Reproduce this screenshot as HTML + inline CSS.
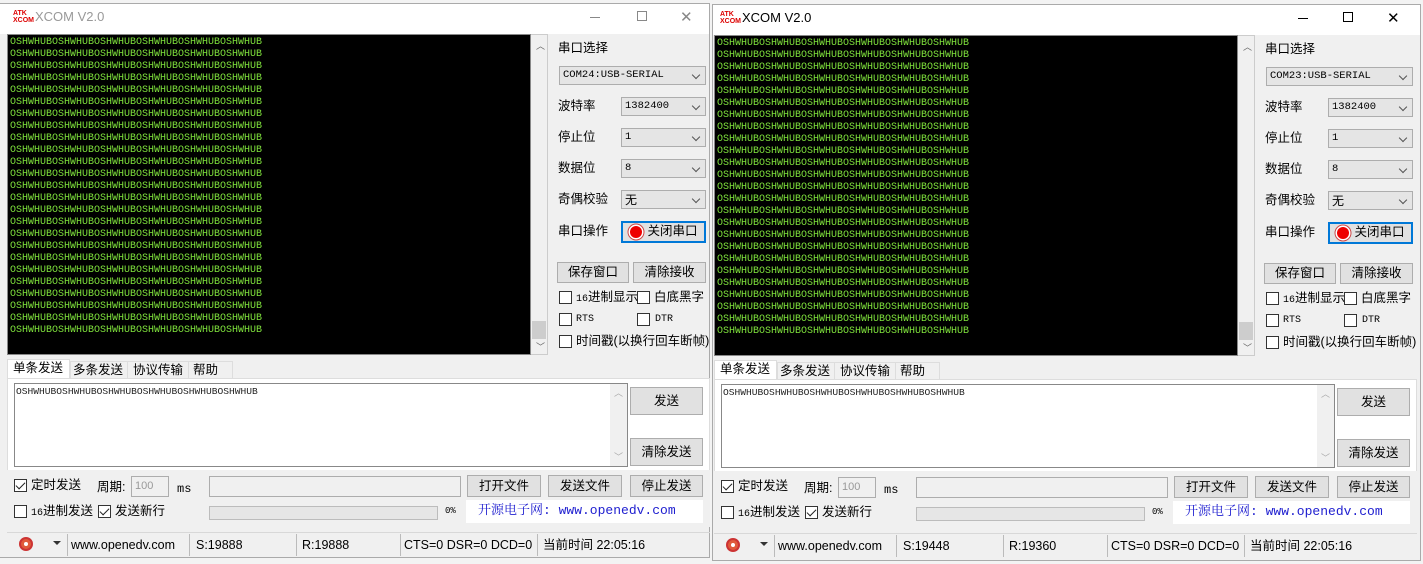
<!DOCTYPE html>
<html><head><meta charset="utf-8"><style>
*{margin:0;padding:0;box-sizing:border-box}
body *{white-space:nowrap}
body{width:1423px;height:564px;background:#f3f3f3;position:relative;overflow:hidden;font-family:"Liberation Sans","Noto Sans CJK SC",sans-serif;font-size:12px;color:#000}
.a{position:absolute}
.win{position:absolute;background:#f0f0f0;border:1px solid #aaa}
.tb{position:absolute;left:0;right:0;top:0;height:30px;background:#fff}
.c{position:absolute;left:0;top:0;width:1px;height:1px}
.term{position:absolute;left:7px;top:34px;width:524px;height:321px;background:#000;border:1px solid #888;overflow:hidden;padding:2px 0 0 2px;font-family:"Liberation Mono",monospace;font-size:10px;line-height:12px;color:#7fe23c;white-space:pre !important}
.sb{position:absolute;left:531px;top:34px;width:17px;height:321px;background:#f0f0f0;border:1px solid #ccc;border-left:none}
.lbl{position:absolute;font-size:12.5px;line-height:16px;font-family:"Liberation Sans","Noto Sans CJK SC",sans-serif}
.combo{position:absolute;height:19px;border:1px solid #adadad;background:#e5e5e5;font-family:"Liberation Mono",monospace;font-size:10.5px;line-height:17px;padding-left:3px}
.combo:after{content:"";position:absolute;right:6px;top:5px;width:5px;height:5px;border-right:1px solid #555;border-bottom:1px solid #555;transform:rotate(45deg)}
.btn{position:absolute;border:1px solid #adadad;background:#e1e1e1;text-align:center;font-family:"Liberation Sans","Noto Sans CJK SC",sans-serif;font-size:12.5px}
.cb{position:absolute;width:13px;height:13px;border:1px solid #333;background:#fff}
.ck:after{content:"";position:absolute;left:3px;top:0px;width:4px;height:8px;border-right:1.3px solid #222;border-bottom:1.3px solid #222;transform:rotate(45deg)}
.inp{position:absolute;border:1px solid #adadad;background:#f0f0f0}
.st{position:absolute;font-size:12.5px;line-height:16px}
.dv{position:absolute;width:1px;height:22px;background:#bbb}
.mono{font-family:"Liberation Mono",monospace;font-size:10px}
</style></head><body>

<div class="win" style="left:-2px;top:3px;width:712px;height:555px"><div class="tb"></div></div>
<div class="c" style="left:0;top:0">
 <div class="a" style="left:13px;top:10px;font-size:7px;line-height:7px;color:#d00;font-weight:bold;white-space:normal">ATK<br>XCOM</div>
 <div class="a" style="left:35px;top:9px;font-size:13px;color:#999">XCOM V2.0</div>
 <div class="a" style="left:590px;top:17px;width:10px;height:1px;background:#888"></div>
 <div class="a" style="left:637px;top:11px;width:10px;height:10px;border:1px solid #888"></div>
 <div class="a" style="left:680px;top:8px;font-size:15px;color:#888">✕</div>
</div>

<div class="win" style="left:712px;top:4px;width:709px;height:557px"><div class="tb"></div></div>
<div class="c" style="left:707px;top:1px">
 <div class="a" style="left:13px;top:10px;font-size:7px;line-height:7px;color:#d00;font-weight:bold;white-space:normal">ATK<br>XCOM</div>
 <div class="a" style="left:35px;top:9px;font-size:13px;color:#000">XCOM V2.0</div>
 <div class="a" style="left:591px;top:17px;width:10px;height:1px;background:#000"></div>
 <div class="a" style="left:636px;top:11px;width:10px;height:10px;border:1px solid #000"></div>
 <div class="a" style="left:680px;top:8px;font-size:15px;color:#000">✕</div>
</div>

<div class="c" style="left:0;top:0">
<div class="term">OSHWHUBOSHWHUBOSHWHUBOSHWHUBOSHWHUBOSHWHUB
OSHWHUBOSHWHUBOSHWHUBOSHWHUBOSHWHUBOSHWHUB
OSHWHUBOSHWHUBOSHWHUBOSHWHUBOSHWHUBOSHWHUB
OSHWHUBOSHWHUBOSHWHUBOSHWHUBOSHWHUBOSHWHUB
OSHWHUBOSHWHUBOSHWHUBOSHWHUBOSHWHUBOSHWHUB
OSHWHUBOSHWHUBOSHWHUBOSHWHUBOSHWHUBOSHWHUB
OSHWHUBOSHWHUBOSHWHUBOSHWHUBOSHWHUBOSHWHUB
OSHWHUBOSHWHUBOSHWHUBOSHWHUBOSHWHUBOSHWHUB
OSHWHUBOSHWHUBOSHWHUBOSHWHUBOSHWHUBOSHWHUB
OSHWHUBOSHWHUBOSHWHUBOSHWHUBOSHWHUBOSHWHUB
OSHWHUBOSHWHUBOSHWHUBOSHWHUBOSHWHUBOSHWHUB
OSHWHUBOSHWHUBOSHWHUBOSHWHUBOSHWHUBOSHWHUB
OSHWHUBOSHWHUBOSHWHUBOSHWHUBOSHWHUBOSHWHUB
OSHWHUBOSHWHUBOSHWHUBOSHWHUBOSHWHUBOSHWHUB
OSHWHUBOSHWHUBOSHWHUBOSHWHUBOSHWHUBOSHWHUB
OSHWHUBOSHWHUBOSHWHUBOSHWHUBOSHWHUBOSHWHUB
OSHWHUBOSHWHUBOSHWHUBOSHWHUBOSHWHUBOSHWHUB
OSHWHUBOSHWHUBOSHWHUBOSHWHUBOSHWHUBOSHWHUB
OSHWHUBOSHWHUBOSHWHUBOSHWHUBOSHWHUBOSHWHUB
OSHWHUBOSHWHUBOSHWHUBOSHWHUBOSHWHUBOSHWHUB
OSHWHUBOSHWHUBOSHWHUBOSHWHUBOSHWHUBOSHWHUB
OSHWHUBOSHWHUBOSHWHUBOSHWHUBOSHWHUBOSHWHUB
OSHWHUBOSHWHUBOSHWHUBOSHWHUBOSHWHUBOSHWHUB
OSHWHUBOSHWHUBOSHWHUBOSHWHUBOSHWHUBOSHWHUB
OSHWHUBOSHWHUBOSHWHUBOSHWHUBOSHWHUBOSHWHUB</div>
<div class="sb"><div class="a" style="left:5px;top:4px;font-size:9px;color:#666">︿</div><div class="a" style="left:1px;top:286px;width:14px;height:18px;background:#cdcdcd"></div><div class="a" style="left:5px;top:305px;font-size:9px;color:#666">﹀</div></div>

<div class="lbl" style="left:558px;top:40px">串口选择</div>
<div class="combo" style="left:559px;top:66px;width:147px">COM24:USB-SERIAL</div>
<div class="lbl" style="left:558px;top:98px">波特率</div>
<div class="combo" style="left:621px;top:97px;width:85px">1382400</div>
<div class="lbl" style="left:558px;top:129px">停止位</div>
<div class="combo" style="left:621px;top:128px;width:85px">1</div>
<div class="lbl" style="left:558px;top:160px">数据位</div>
<div class="combo" style="left:621px;top:159px;width:85px">8</div>
<div class="lbl" style="left:558px;top:191px">奇偶校验</div>
<div class="combo" style="left:621px;top:190px;width:85px;font-family:'Noto Sans CJK SC';font-size:12px">无</div>
<div class="lbl" style="left:558px;top:223px">串口操作</div>
<div class="btn" style="left:621px;top:221px;width:85px;height:22px;border:2px solid #0078d7;line-height:17px;padding-left:18px">关闭串口</div>
<div class="a" style="left:630px;top:226px;width:12px;height:12px;border-radius:50%;background:#e00;box-shadow:0 0 0 1.5px #fff,0 0 0 2.5px #c44"></div>
<div class="btn" style="left:557px;top:262px;width:72px;height:21px;line-height:19px">保存窗口</div>
<div class="btn" style="left:633px;top:262px;width:73px;height:21px;line-height:19px">清除接收</div>
<div class="cb" style="left:559px;top:291px"></div><div class="lbl" style="left:576px;top:289px"><span class="mono">16</span>进制显示</div>
<div class="cb" style="left:637px;top:291px"></div><div class="lbl" style="left:654px;top:289px">白底黑字</div>
<div class="cb" style="left:559px;top:313px"></div><div class="lbl mono" style="left:576px;top:312px">RTS</div>
<div class="cb" style="left:637px;top:313px"></div><div class="lbl mono" style="left:655px;top:312px">DTR</div>
<div class="cb" style="left:559px;top:335px"></div><div class="lbl" style="left:576px;top:333px">时间戳(以换行回车断帧)</div>

<div class="a" style="left:7px;top:359px;width:63px;height:20px;background:#fff;border:1px solid #ddd;border-bottom:none"></div>
<div class="lbl" style="left:13px;top:360px">单条发送</div>
<div class="a" style="left:70px;top:361px;width:163px;height:18px;border:1px solid #ddd;border-bottom:none;background:#f0f0f0"></div>
<div class="a" style="left:127px;top:361px;width:1px;height:18px;background:#ddd"></div>
<div class="a" style="left:188px;top:361px;width:1px;height:18px;background:#ddd"></div>
<div class="lbl" style="left:73px;top:362px">多条发送</div>
<div class="lbl" style="left:133px;top:362px">协议传输</div>
<div class="lbl" style="left:193px;top:362px">帮助</div>
<div class="a" style="left:7px;top:378px;width:703px;height:149px;background:#fff;border:1px solid #ddd"></div>
<div class="a" style="left:14px;top:383px;width:614px;height:84px;background:#fff;border:1px solid #888"></div>
<div class="a" style="left:610px;top:384px;width:17px;height:82px;background:#f0f0f0"><div class="a" style="left:4px;top:2px;font-size:9px;color:#aaa">︿</div><div class="a" style="left:4px;top:66px;font-size:9px;color:#aaa">﹀</div></div>
<div class="a mono" style="left:16px;top:386px;font-size:9.6px;color:#222">OSHWHUBOSHWHUBOSHWHUBOSHWHUBOSHWHUBOSHWHUB</div>
<div class="btn" style="left:630px;top:387px;width:73px;height:28px;line-height:26px">发送</div>
<div class="btn" style="left:630px;top:438px;width:73px;height:28px;line-height:26px">清除发送</div>
<div class="a" style="left:7px;top:470px;width:703px;height:57px;background:#f0f0f0"></div>
<div class="cb ck" style="left:14px;top:479px"></div><div class="lbl" style="left:31px;top:477px">定时发送</div>
<div class="lbl" style="left:97px;top:479px">周期:</div>
<div class="inp" style="left:131px;top:476px;width:38px;height:21px;color:#999;font-size:11px;padding:3px 0 0 3px">100</div>
<div class="lbl mono" style="left:177px;top:481px;font-size:12px">ms</div>
<div class="inp" style="left:209px;top:476px;width:252px;height:21px"></div>
<div class="btn" style="left:467px;top:475px;width:74px;height:22px;line-height:20px">打开文件</div>
<div class="btn" style="left:548px;top:475px;width:74px;height:22px;line-height:20px">发送文件</div>
<div class="btn" style="left:630px;top:475px;width:73px;height:22px;line-height:20px">停止发送</div>
<div class="cb" style="left:14px;top:505px"></div><div class="lbl" style="left:31px;top:503px"><span class="mono">16</span>进制发送</div>
<div class="cb ck" style="left:98px;top:505px"></div><div class="lbl" style="left:115px;top:503px">发送新行</div>
<div class="a" style="left:209px;top:506px;width:229px;height:14px;background:#e6e6e6;border:1px solid #bcbcbc"></div>
<div class="a mono" style="left:445px;top:506px;font-size:9px">0%</div>
<div class="a" style="left:466px;top:500px;width:237px;height:23px;background:#fff;color:#2020d0;font-family:'Liberation Mono','Noto Serif CJK SC',monospace;font-size:13px;line-height:22px;padding-left:12px">开源电子网: www.openedv.com</div>

<div class="a" style="left:7px;top:532px;width:703px;height:1px;background:#d8d8d8"></div>
<div class="a" style="left:19px;top:537px;width:14px;height:14px;border-radius:50%;background:#e05a3a;border:2px solid #c33"><div class="a" style="left:3px;top:3px;width:4px;height:4px;border-radius:50%;background:#fff"></div></div>
<div class="a" style="left:53px;top:541px;width:0;height:0;border-left:4px solid transparent;border-right:4px solid transparent;border-top:4px solid #333"></div>
<div class="dv" style="left:67px;top:534px"></div>
<div class="st" style="left:71px;top:537px">www.openedv.com</div>
<div class="dv" style="left:189px;top:534px"></div>
<div class="st" style="left:196px;top:537px">S:19888</div>
<div class="dv" style="left:296px;top:534px"></div>
<div class="st" style="left:302px;top:537px">R:19888</div>
<div class="dv" style="left:400px;top:534px"></div>
<div class="st" style="left:404px;top:537px">CTS=0 DSR=0 DCD=0</div>
<div class="dv" style="left:537px;top:534px"></div>
<div class="st" style="left:543px;top:537px">当前时间 22:05:16</div>
</div>

<div class="c" style="left:707px;top:1px">
<div class="term">OSHWHUBOSHWHUBOSHWHUBOSHWHUBOSHWHUBOSHWHUB
OSHWHUBOSHWHUBOSHWHUBOSHWHUBOSHWHUBOSHWHUB
OSHWHUBOSHWHUBOSHWHUBOSHWHUBOSHWHUBOSHWHUB
OSHWHUBOSHWHUBOSHWHUBOSHWHUBOSHWHUBOSHWHUB
OSHWHUBOSHWHUBOSHWHUBOSHWHUBOSHWHUBOSHWHUB
OSHWHUBOSHWHUBOSHWHUBOSHWHUBOSHWHUBOSHWHUB
OSHWHUBOSHWHUBOSHWHUBOSHWHUBOSHWHUBOSHWHUB
OSHWHUBOSHWHUBOSHWHUBOSHWHUBOSHWHUBOSHWHUB
OSHWHUBOSHWHUBOSHWHUBOSHWHUBOSHWHUBOSHWHUB
OSHWHUBOSHWHUBOSHWHUBOSHWHUBOSHWHUBOSHWHUB
OSHWHUBOSHWHUBOSHWHUBOSHWHUBOSHWHUBOSHWHUB
OSHWHUBOSHWHUBOSHWHUBOSHWHUBOSHWHUBOSHWHUB
OSHWHUBOSHWHUBOSHWHUBOSHWHUBOSHWHUBOSHWHUB
OSHWHUBOSHWHUBOSHWHUBOSHWHUBOSHWHUBOSHWHUB
OSHWHUBOSHWHUBOSHWHUBOSHWHUBOSHWHUBOSHWHUB
OSHWHUBOSHWHUBOSHWHUBOSHWHUBOSHWHUBOSHWHUB
OSHWHUBOSHWHUBOSHWHUBOSHWHUBOSHWHUBOSHWHUB
OSHWHUBOSHWHUBOSHWHUBOSHWHUBOSHWHUBOSHWHUB
OSHWHUBOSHWHUBOSHWHUBOSHWHUBOSHWHUBOSHWHUB
OSHWHUBOSHWHUBOSHWHUBOSHWHUBOSHWHUBOSHWHUB
OSHWHUBOSHWHUBOSHWHUBOSHWHUBOSHWHUBOSHWHUB
OSHWHUBOSHWHUBOSHWHUBOSHWHUBOSHWHUBOSHWHUB
OSHWHUBOSHWHUBOSHWHUBOSHWHUBOSHWHUBOSHWHUB
OSHWHUBOSHWHUBOSHWHUBOSHWHUBOSHWHUBOSHWHUB
OSHWHUBOSHWHUBOSHWHUBOSHWHUBOSHWHUBOSHWHUB</div>
<div class="sb"><div class="a" style="left:5px;top:4px;font-size:9px;color:#666">︿</div><div class="a" style="left:1px;top:286px;width:14px;height:18px;background:#cdcdcd"></div><div class="a" style="left:5px;top:305px;font-size:9px;color:#666">﹀</div></div>

<div class="lbl" style="left:558px;top:40px">串口选择</div>
<div class="combo" style="left:559px;top:66px;width:147px">COM23:USB-SERIAL</div>
<div class="lbl" style="left:558px;top:98px">波特率</div>
<div class="combo" style="left:621px;top:97px;width:85px">1382400</div>
<div class="lbl" style="left:558px;top:129px">停止位</div>
<div class="combo" style="left:621px;top:128px;width:85px">1</div>
<div class="lbl" style="left:558px;top:160px">数据位</div>
<div class="combo" style="left:621px;top:159px;width:85px">8</div>
<div class="lbl" style="left:558px;top:191px">奇偶校验</div>
<div class="combo" style="left:621px;top:190px;width:85px;font-family:'Noto Sans CJK SC';font-size:12px">无</div>
<div class="lbl" style="left:558px;top:223px">串口操作</div>
<div class="btn" style="left:621px;top:221px;width:85px;height:22px;border:2px solid #0078d7;line-height:17px;padding-left:18px">关闭串口</div>
<div class="a" style="left:630px;top:226px;width:12px;height:12px;border-radius:50%;background:#e00;box-shadow:0 0 0 1.5px #fff,0 0 0 2.5px #c44"></div>
<div class="btn" style="left:557px;top:262px;width:72px;height:21px;line-height:19px">保存窗口</div>
<div class="btn" style="left:633px;top:262px;width:73px;height:21px;line-height:19px">清除接收</div>
<div class="cb" style="left:559px;top:291px"></div><div class="lbl" style="left:576px;top:289px"><span class="mono">16</span>进制显示</div>
<div class="cb" style="left:637px;top:291px"></div><div class="lbl" style="left:654px;top:289px">白底黑字</div>
<div class="cb" style="left:559px;top:313px"></div><div class="lbl mono" style="left:576px;top:312px">RTS</div>
<div class="cb" style="left:637px;top:313px"></div><div class="lbl mono" style="left:655px;top:312px">DTR</div>
<div class="cb" style="left:559px;top:335px"></div><div class="lbl" style="left:576px;top:333px">时间戳(以换行回车断帧)</div>

<div class="a" style="left:7px;top:359px;width:63px;height:20px;background:#fff;border:1px solid #ddd;border-bottom:none"></div>
<div class="lbl" style="left:13px;top:360px">单条发送</div>
<div class="a" style="left:70px;top:361px;width:163px;height:18px;border:1px solid #ddd;border-bottom:none;background:#f0f0f0"></div>
<div class="a" style="left:127px;top:361px;width:1px;height:18px;background:#ddd"></div>
<div class="a" style="left:188px;top:361px;width:1px;height:18px;background:#ddd"></div>
<div class="lbl" style="left:73px;top:362px">多条发送</div>
<div class="lbl" style="left:133px;top:362px">协议传输</div>
<div class="lbl" style="left:193px;top:362px">帮助</div>
<div class="a" style="left:7px;top:378px;width:703px;height:149px;background:#fff;border:1px solid #ddd"></div>
<div class="a" style="left:14px;top:383px;width:614px;height:84px;background:#fff;border:1px solid #888"></div>
<div class="a" style="left:610px;top:384px;width:17px;height:82px;background:#f0f0f0"><div class="a" style="left:4px;top:2px;font-size:9px;color:#aaa">︿</div><div class="a" style="left:4px;top:66px;font-size:9px;color:#aaa">﹀</div></div>
<div class="a mono" style="left:16px;top:386px;font-size:9.6px;color:#222">OSHWHUBOSHWHUBOSHWHUBOSHWHUBOSHWHUBOSHWHUB</div>
<div class="btn" style="left:630px;top:387px;width:73px;height:28px;line-height:26px">发送</div>
<div class="btn" style="left:630px;top:438px;width:73px;height:28px;line-height:26px">清除发送</div>
<div class="a" style="left:7px;top:470px;width:703px;height:57px;background:#f0f0f0"></div>
<div class="cb ck" style="left:14px;top:479px"></div><div class="lbl" style="left:31px;top:477px">定时发送</div>
<div class="lbl" style="left:97px;top:479px">周期:</div>
<div class="inp" style="left:131px;top:476px;width:38px;height:21px;color:#999;font-size:11px;padding:3px 0 0 3px">100</div>
<div class="lbl mono" style="left:177px;top:481px;font-size:12px">ms</div>
<div class="inp" style="left:209px;top:476px;width:252px;height:21px"></div>
<div class="btn" style="left:467px;top:475px;width:74px;height:22px;line-height:20px">打开文件</div>
<div class="btn" style="left:548px;top:475px;width:74px;height:22px;line-height:20px">发送文件</div>
<div class="btn" style="left:630px;top:475px;width:73px;height:22px;line-height:20px">停止发送</div>
<div class="cb" style="left:14px;top:505px"></div><div class="lbl" style="left:31px;top:503px"><span class="mono">16</span>进制发送</div>
<div class="cb ck" style="left:98px;top:505px"></div><div class="lbl" style="left:115px;top:503px">发送新行</div>
<div class="a" style="left:209px;top:506px;width:229px;height:14px;background:#e6e6e6;border:1px solid #bcbcbc"></div>
<div class="a mono" style="left:445px;top:506px;font-size:9px">0%</div>
<div class="a" style="left:466px;top:500px;width:237px;height:23px;background:#fff;color:#2020d0;font-family:'Liberation Mono','Noto Serif CJK SC',monospace;font-size:13px;line-height:22px;padding-left:12px">开源电子网: www.openedv.com</div>

<div class="a" style="left:7px;top:532px;width:703px;height:1px;background:#d8d8d8"></div>
<div class="a" style="left:19px;top:537px;width:14px;height:14px;border-radius:50%;background:#e05a3a;border:2px solid #c33"><div class="a" style="left:3px;top:3px;width:4px;height:4px;border-radius:50%;background:#fff"></div></div>
<div class="a" style="left:53px;top:541px;width:0;height:0;border-left:4px solid transparent;border-right:4px solid transparent;border-top:4px solid #333"></div>
<div class="dv" style="left:67px;top:534px"></div>
<div class="st" style="left:71px;top:537px">www.openedv.com</div>
<div class="dv" style="left:189px;top:534px"></div>
<div class="st" style="left:196px;top:537px">S:19448</div>
<div class="dv" style="left:296px;top:534px"></div>
<div class="st" style="left:302px;top:537px">R:19360</div>
<div class="dv" style="left:400px;top:534px"></div>
<div class="st" style="left:404px;top:537px">CTS=0 DSR=0 DCD=0</div>
<div class="dv" style="left:537px;top:534px"></div>
<div class="st" style="left:543px;top:537px">当前时间 22:05:16</div>
</div>
</body></html>
